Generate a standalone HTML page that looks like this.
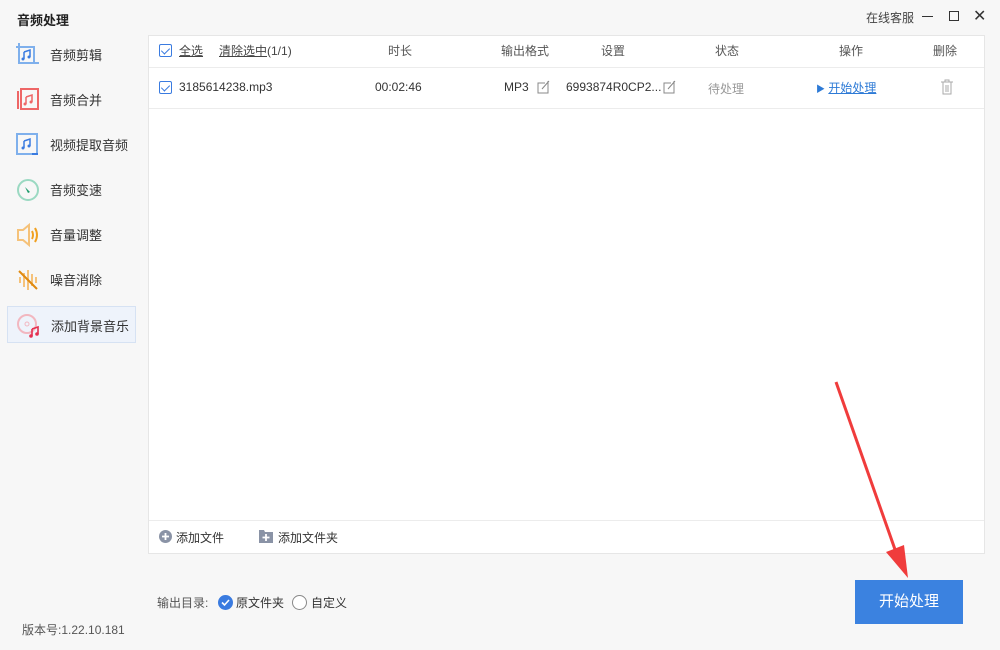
<!DOCTYPE html>
<html><head><meta charset="utf-8"><style>
*{margin:0;padding:0;box-sizing:border-box}
body{width:1000px;height:650px;background:#f7f7f7;font-family:"Liberation Sans","Noto Sans CJK SC",sans-serif;font-size:12px;color:#333;position:relative;overflow:hidden}
.a{position:absolute;white-space:nowrap}
.nav{position:absolute;left:7px;width:129px;height:37px}
.nav .t{position:absolute;left:43px;top:9px;font-size:13px;color:#333}
.nav svg{position:absolute;left:8px;top:6px}
.panel{position:absolute;left:148px;top:35px;width:837px;height:519px;background:#fff;border:1px solid #e6e6e6}
.cb{position:absolute;width:13px;height:13px;border:1px solid #3a7be0;border-radius:2px;background:#fff}
.cb:after{content:"";position:absolute;left:3px;top:1px;width:4px;height:7px;border:solid #3a7be0;border-width:0 1.5px 1.5px 0;transform:rotate(45deg)}
.h{color:#555}
</style></head><body>
<div class="a" style="left:17px;top:10px;font-size:13px;font-weight:bold;color:#222">音频处理</div>
<div class="a" style="left:866px;top:9px;color:#444">在线客服</div>
<div class="a" style="left:922px;top:16px;width:11px;height:1px;background:#333"></div>
<div class="a" style="left:949px;top:11px;width:10px;height:10px;border:1px solid #333"></div>
<div class="a" style="left:973px;top:6px;font-size:16px;color:#333">✕</div>

<div class="nav" style="top:36px"><svg width="26" height="26"><path d="M4 1v20h20M1 5h18v17" fill="none" stroke="#7fb0ec" stroke-width="2"/><path d="M9 10l6-2v7M9 10v7" fill="none" stroke="#3a7be0" stroke-width="1.5"/><circle cx="8" cy="17" r="1.5" fill="#3a7be0"/><circle cx="14" cy="15" r="1.5" fill="#3a7be0"/></svg><div class="t">音频剪辑</div></div>
<div class="nav" style="top:81px"><svg width="26" height="26"><path d="M3 4v18M6 2h17v20H6z" fill="none" stroke="#e66" stroke-width="2"/><path d="M11 10l6-2v7M11 10v7" fill="none" stroke="#e66" stroke-width="1.5"/><circle cx="10" cy="17" r="1.5" fill="#e66"/><circle cx="16" cy="15" r="1.5" fill="#e66"/></svg><div class="t">音频合并</div></div>
<div class="nav" style="top:126px"><svg width="26" height="26"><rect x="2" y="2" width="20" height="20" fill="none" stroke="#7fb0ec" stroke-width="2"/><path d="M9 9l6-2v7M9 9v7" fill="none" stroke="#3a7be0" stroke-width="1.5"/><circle cx="8" cy="16" r="1.5" fill="#3a7be0"/><circle cx="14" cy="14" r="1.5" fill="#3a7be0"/><path d="M17 22h6" stroke="#3a7be0" stroke-width="2"/></svg><div class="t">视频提取音频</div></div>
<div class="nav" style="top:171px"><svg width="26" height="26"><circle cx="13" cy="13" r="10" fill="none" stroke="#9bd9c2" stroke-width="2"/><path d="M10 10l5 5-2 1z" fill="#1a9a6a"/></svg><div class="t">音频变速</div></div>
<div class="nav" style="top:216px"><svg width="26" height="26"><path d="M3 8h5l6-5v20l-6-5H3z" fill="none" stroke="#f5c27a" stroke-width="2"/><path d="M17 9q2 4 0 8M20 6q4 7 0 14" fill="none" stroke="#f0a020" stroke-width="2"/></svg><div class="t">音量调整</div></div>
<div class="nav" style="top:261px"><svg width="26" height="26"><path d="M5 10v6M9 6v14M13 3v20M17 7v12M21 10v6" stroke="#f5c27a" stroke-width="2"/><path d="M4 4l18 18" stroke="#e08a10" stroke-width="2"/></svg><div class="t">噪音消除</div></div>
<div class="nav" style="top:306px;background:#eef3fb;border:1px solid #d6e2f3"><svg width="26" height="26"><circle cx="11" cy="11" r="9" fill="none" stroke="#f2b7c0" stroke-width="2"/><circle cx="11" cy="11" r="2" fill="none" stroke="#f2b7c0"/><path d="M16 16l6-2v7M16 16v7" fill="none" stroke="#e53050" stroke-width="1.6"/><circle cx="15" cy="23" r="1.8" fill="#e53050"/><circle cx="21" cy="21" r="1.8" fill="#e53050"/></svg><div class="t">添加背景音乐</div></div>
<div class="a" style="left:22px;top:621px;color:#555">版本号:1.22.10.181</div>

<div class="panel">
<div class="a" style="left:0;top:31px;width:835px;height:1px;background:#ececec"></div>
<div class="a" style="left:0;top:72px;width:835px;height:1px;background:#ececec"></div>
<div class="a" style="left:0;top:484px;width:835px;height:1px;background:#ececec"></div>
<div class="cb" style="left:10px;top:8px"></div>
<div class="a" style="left:30px;top:6px;text-decoration:underline;color:#444">全选</div>
<div class="a" style="left:70px;top:6px;color:#444"><u>清除选中</u>(1/1)</div>
<div class="a h" style="left:239px;top:6px">时长</div>
<div class="a h" style="left:352px;top:6px">输出格式</div>
<div class="a h" style="left:452px;top:6px">设置</div>
<div class="a h" style="left:566px;top:6px">状态</div>
<div class="a h" style="left:690px;top:6px">操作</div>
<div class="a h" style="left:784px;top:6px">删除</div>
<div class="cb" style="left:10px;top:45px"></div>
<div class="a" style="left:30px;top:44px">3185614238.mp3</div>
<div class="a" style="left:226px;top:44px">00:02:46</div>
<div class="a" style="left:355px;top:44px">MP3</div>
<svg class="a" style="left:388px;top:44px" width="14" height="14"><path d="M11 1v12H1V3h7M5 9l7-8" fill="none" stroke="#888"/></svg>
<div class="a" style="left:417px;top:44px">6993874R0CP2...</div>
<svg class="a" style="left:514px;top:44px" width="14" height="14"><path d="M11 1v12H1V3h7M5 9l7-8" fill="none" stroke="#888"/></svg>
<div class="a" style="left:559px;top:44px;color:#999">待处理</div>
<div class="a" style="left:667px;top:43px;color:#2d7ad6"><span style="font-size:9px">▶</span> <u>开始处理</u></div>
<svg class="a" style="left:790px;top:43px" width="16" height="16"><path d="M2 3h12M6 3V1h4v2M4 3v12h8V3M7 6v7M9 6v7" fill="none" stroke="#aaa"/></svg>
<svg class="a" style="left:10px;top:494px" width="13" height="13"><circle cx="6.5" cy="6.5" r="6.5" fill="#8a93a6"/><path d="M6.5 3v7M3 6.5h7" stroke="#fff" stroke-width="1.8"/></svg>
<div class="a" style="left:27px;top:493px">添加文件</div>
<svg class="a" style="left:110px;top:494px" width="14" height="13"><path d="M0 0h5l1 2h8v11H0z" fill="#8a93a6"/><path d="M7 4v7M3.5 7.5h7" stroke="#fff" stroke-width="1.8"/></svg>
<div class="a" style="left:129px;top:493px">添加文件夹</div>
</div>

<div class="a" style="left:157px;top:594px;color:#555">输出目录:</div>
<svg class="a" style="left:218px;top:595px" width="15" height="15"><circle cx="7.5" cy="7.5" r="7.5" fill="#3a7be0"/><path d="M4 7.5l2.5 2.5 4.5-5" fill="none" stroke="#fff" stroke-width="1.6"/></svg>
<div class="a" style="left:236px;top:594px">原文件夹</div>
<div class="a" style="left:292px;top:595px;width:15px;height:15px;border:1px solid #888;border-radius:50%;background:#fff"></div>
<div class="a" style="left:311px;top:594px">自定义</div>

<div class="a" style="left:855px;top:580px;width:108px;height:44px;background:#3b82e0;color:#fff;font-size:15px;text-align:center;line-height:44px">开始处理</div>
<svg class="a" style="left:830px;top:380px" width="80" height="200"><path d="M6 2L68 178" stroke="#f03c3c" stroke-width="3"/><path d="M56 172l22 26 -4-33z" fill="#f03c3c"/></svg>
</body></html>
